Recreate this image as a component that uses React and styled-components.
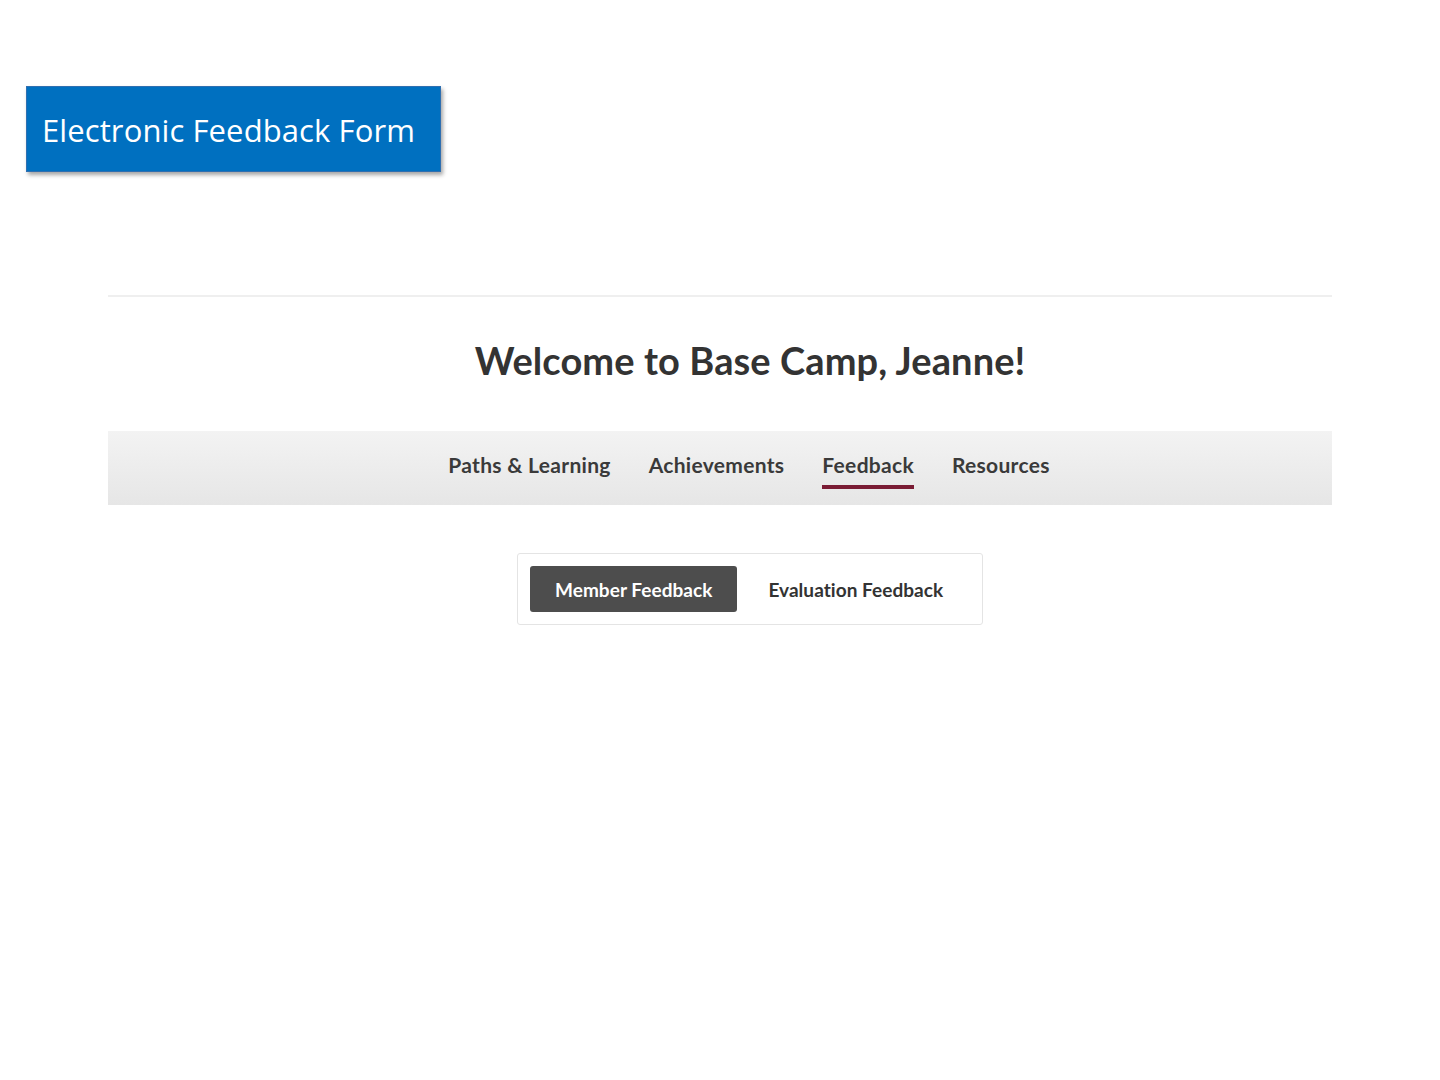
import React, { useState } from 'react';
import styled, { createGlobalStyle } from 'styled-components';

const GlobalStyle = createGlobalStyle`
  html, body {
    margin: 0;
    padding: 0;
    background: #fff;
  }
  body {
    font-family: Lato, "Open Sans", sans-serif;
    color: #333;
  }
`;

const Page = styled.div`
  width: 1440px;
  min-height: 1080px;
  padding-top: 86px;
  box-sizing: border-box;
`;

const Banner = styled.div`
  margin-left: 26px;
  width: 415px;
  height: 86px;
  box-sizing: border-box;
  background: #0070c0;
  border: 1px solid #2f6fb0;
  box-shadow: 2px 3px 4px rgba(0, 0, 0, 0.35);
  display: flex;
  align-items: center;
  padding-left: 15px;
  padding-top: 2px;
  color: #fff;
  font-family: "Open Sans", "Noto Sans", sans-serif;
  font-size: 31px;
  letter-spacing: 0.1px;
`;

const Main = styled.div`
  margin: 123px 108px 0;
  border-top: 2px solid #efefef;
`;

const Heading = styled.h1`
  margin: 0;
  padding-top: 40px;
  padding-left: 60px;
  height: 94px;
  box-sizing: content-box;
  text-align: center;
  font-size: 38px;
  font-weight: 700;
  color: #333;
  line-height: 46px;
  letter-spacing: 0.1px;
`;

const NavBar = styled.nav`
  height: 74px;
  box-sizing: border-box;
  background: linear-gradient(#f3f3f3, #e6e6e6);
  display: flex;
  justify-content: center;
  align-items: stretch;
  gap: 38px;
  padding-left: 58px;
  padding-bottom: 8px;
`;

const NavItem = styled.a`
  position: relative;
  display: flex;
  align-items: center;
  font-size: 21px;
  font-weight: 700;
  letter-spacing: 0.3px;
  color: #3a3a3a;
  text-decoration: none;
  white-space: nowrap;
  cursor: pointer;
  &::after {
    content: '';
    display: ${({ $active }) => ($active ? 'block' : 'none')};
    position: absolute;
    left: 0;
    right: 0;
    top: 54px;
    height: 4px;
    background: #7a1c34;
  }
`;

const TabsWrap = styled.div`
  display: flex;
  justify-content: center;
  margin-top: 48px;
  padding-left: 60px;
`;

const Tabs = styled.div`
  display: flex;
  align-items: center;
  border: 1px solid #e4e4e4;
  border-radius: 3px;
  padding: 12px;
  width: 466px;
  box-sizing: border-box;
`;

const Tab = styled.button`
  flex-shrink: 0;
  height: 46px;
  border: 0;
  border-radius: 3px;
  padding: 0 25px;
  white-space: nowrap;
  font-family: Lato, sans-serif;
  font-size: 19px;
  font-weight: 700;
  letter-spacing: 0.05px;
  cursor: pointer;
  background: ${({ $active }) => ($active ? '#4d4d4d' : 'transparent')};
  color: ${({ $active }) => ($active ? '#fff' : '#333')};
  margin-right: ${({ $active }) => ($active ? '6px' : '0')};
`;

const navItems = ['Paths & Learning', 'Achievements', 'Feedback', 'Resources'];

export default function App() {
  const [tab, setTab] = useState('member');
  return (
    <>
      <GlobalStyle />
      <Page>
        <Banner>Electronic Feedback Form</Banner>
        <Main>
          <Heading>Welcome to Base Camp, Jeanne!</Heading>
          <NavBar>
            {navItems.map(item => (
              <NavItem key={item} $active={item === 'Feedback'}>
                {item}
              </NavItem>
            ))}
          </NavBar>
          <TabsWrap>
            <Tabs>
              <Tab $active={tab === 'member'} onClick={() => setTab('member')}>
                Member Feedback
              </Tab>
              <Tab $active={tab === 'evaluation'} onClick={() => setTab('evaluation')}>
                Evaluation Feedback
              </Tab>
            </Tabs>
          </TabsWrap>
        </Main>
      </Page>
    </>
  );
}
